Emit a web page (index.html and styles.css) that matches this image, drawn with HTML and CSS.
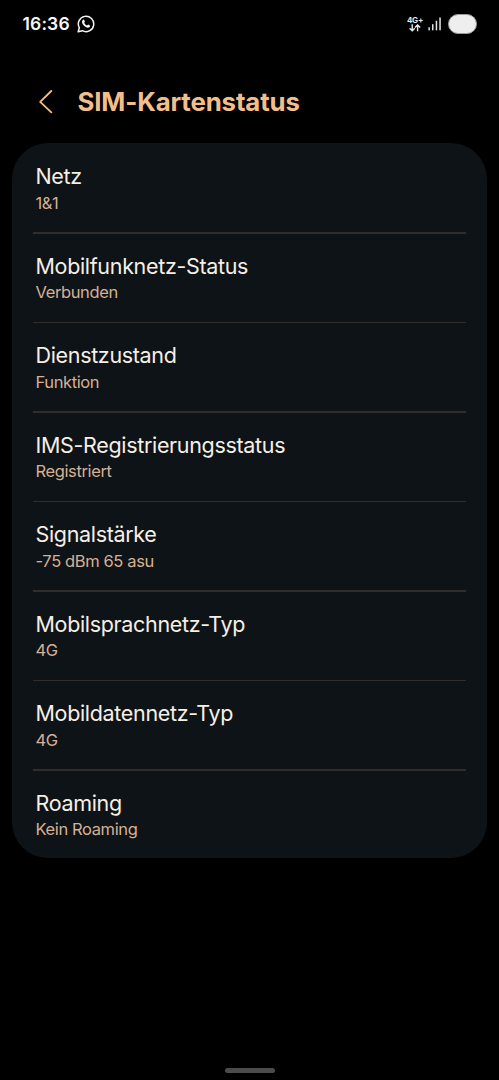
FILE: index.html
```
<!DOCTYPE html>
<html lang="de">
<head>
<meta charset="utf-8">
<title>SIM-Kartenstatus</title>
<link rel="stylesheet" href="styles.css">
</head>
<body>
<div class="screen">
  <div class="statusbar">
    <span class="time">16:36</span>
    <svg class="whatsapp" width="18" height="18" viewBox="0 0 18 18" fill="none">
      <path d="M1.2 16.7 2.3 12.7A7.7 7.7 0 1 1 5.3 15.7Z" stroke="#f4f4f4" stroke-width="1.5" stroke-linejoin="round"/>
      <path d="M5.8 4.9c.5-.5 1.1-.4 1.4.2l.7 1.5c.1.4-.7 1-.6 1.3.5 1.1 1.4 2 2.6 2.5.4.1 1-1 1.4-.8l1.5.8c.5.3.3 1.1-.2 1.6-1 1-2.5.8-4.2-.2-1.5-.9-2.8-2.3-3.2-3.7-.4-1.2-.2-2.4.6-3.2Z" fill="#f4f4f4"/>
    </svg>
    <span class="spacer"></span>
    <div class="network">
      <span class="network-type">4G+</span>
      <svg width="12" height="8" viewBox="0 0 12 8" fill="none" stroke="#e8e8e8" stroke-width="1.4">
        <path d="M3.2 .3V6.700M.6 4.200 3.200 6.800 5.800 4.200M8.600 7.300V1M6 3.500 8.600 .9 11.200 3.500"/>
      </svg>
    </div>
    <svg class="signal" width="14" height="14" viewBox="0 0 14 14" fill="#e4e4e4">
      <rect x=".4" y="10.3" width="1.5" height="3"/>
      <rect x="4" y="7.2" width="1.5" height="6.1"/>
      <rect x="7.7" y="3.8" width="1.5" height="9.5"/>
      <rect x="11.3" y=".5" width="1.5" height="12.8"/>
    </svg>
    <span class="battery"></span>
  </div>
  <header class="header">
    <svg class="back" width="14" height="24" viewBox="0 0 14 24" fill="none" stroke="#f2bf8c" stroke-width="1.8" stroke-linecap="round" stroke-linejoin="round"><path d="M12.300 1 1.200 11.800 12.300 22.400"/></svg>
    <h1 class="title">SIM-Kartenstatus</h1>
  </header>
  <main class="card">
    <div class="row"><div class="label">Netz</div><div class="value">1&amp;1</div></div>
    <div class="row"><div class="label">Mobilfunknetz-Status</div><div class="value">Verbunden</div></div>
    <div class="row"><div class="label">Dienstzustand</div><div class="value">Funktion</div></div>
    <div class="row"><div class="label">IMS-Registrierungsstatus</div><div class="value">Registriert</div></div>
    <div class="row"><div class="label">Signalstärke</div><div class="value">-75 dBm 65 asu</div></div>
    <div class="row"><div class="label">Mobilsprachnetz-Typ</div><div class="value">4G</div></div>
    <div class="row"><div class="label">Mobildatennetz-Typ</div><div class="value">4G</div></div>
    <div class="row"><div class="label">Roaming</div><div class="value">Kein Roaming</div></div>
  </main>
  <div class="handle"></div>
</div>
</body>
</html>
```
FILE: styles.css
```
* { box-sizing: border-box; }
body { margin: 0; background: #000; font-family: Inter, Roboto, sans-serif; }
.screen { width: 499px; height: 1080px; background: #000; display: flex; flex-direction: column; overflow: hidden; }
.statusbar { height: 47px; padding: 0 22px 0 22.5px; display: flex; align-items: center; flex: none; }
.time { font-size: 17.5px; line-height: 20px; font-weight: 600; color: #f6f6f6; letter-spacing: 0.15px; }
.whatsapp { margin-left: 7px; }
.spacer { flex: 1; }
.network { display: flex; flex-direction: column; align-items: center; width: 16px; }
.network-type { font-size: 8px; line-height: 8px; font-weight: 700; color: #e8e8e8; letter-spacing: -0.2px; }
.signal { margin-left: 5px; }
.battery { margin-left: 6px; width: 29px; height: 20px; border-radius: 10px; background: #eee; border: 1.5px solid #999; }
.header { height: 95.5px; padding: 15px 0 0 38.5px; display: flex; align-items: flex-start; flex: none; }
.back { margin-top: 27.5px; }
.title { margin: 24px 0 0 25px; font-size: 25.8px; line-height: 32px; font-weight: 700; color: #f2bf8c; letter-spacing: -0.13px; white-space: nowrap; }
.card { margin: 0 12.5px 0 12px; height: 715.5px; flex: none; background: #0e1317; border-radius: 36px; padding: 0 20.5px 0 21px; }
.row { height: 89.5px; padding: 20.5px 2.5px 0; position: relative; }
.row + .row::before { content: ""; position: absolute; left: 0; right: 0; top: 0; height: 1.5px; background: #322d2b; }
.label { font-size: 21.5px; line-height: 26px; color: #f5efe6; letter-spacing: -0.33px; white-space: nowrap; }
.value { margin-top: 2.5px; font-size: 16.5px; line-height: 22px; color: #d5b095; letter-spacing: -0.38px; white-space: nowrap; }
.handle { width: 50px; height: 5px; border-radius: 3px; background: #4c4c4c; margin: auto auto 7px; }
```
